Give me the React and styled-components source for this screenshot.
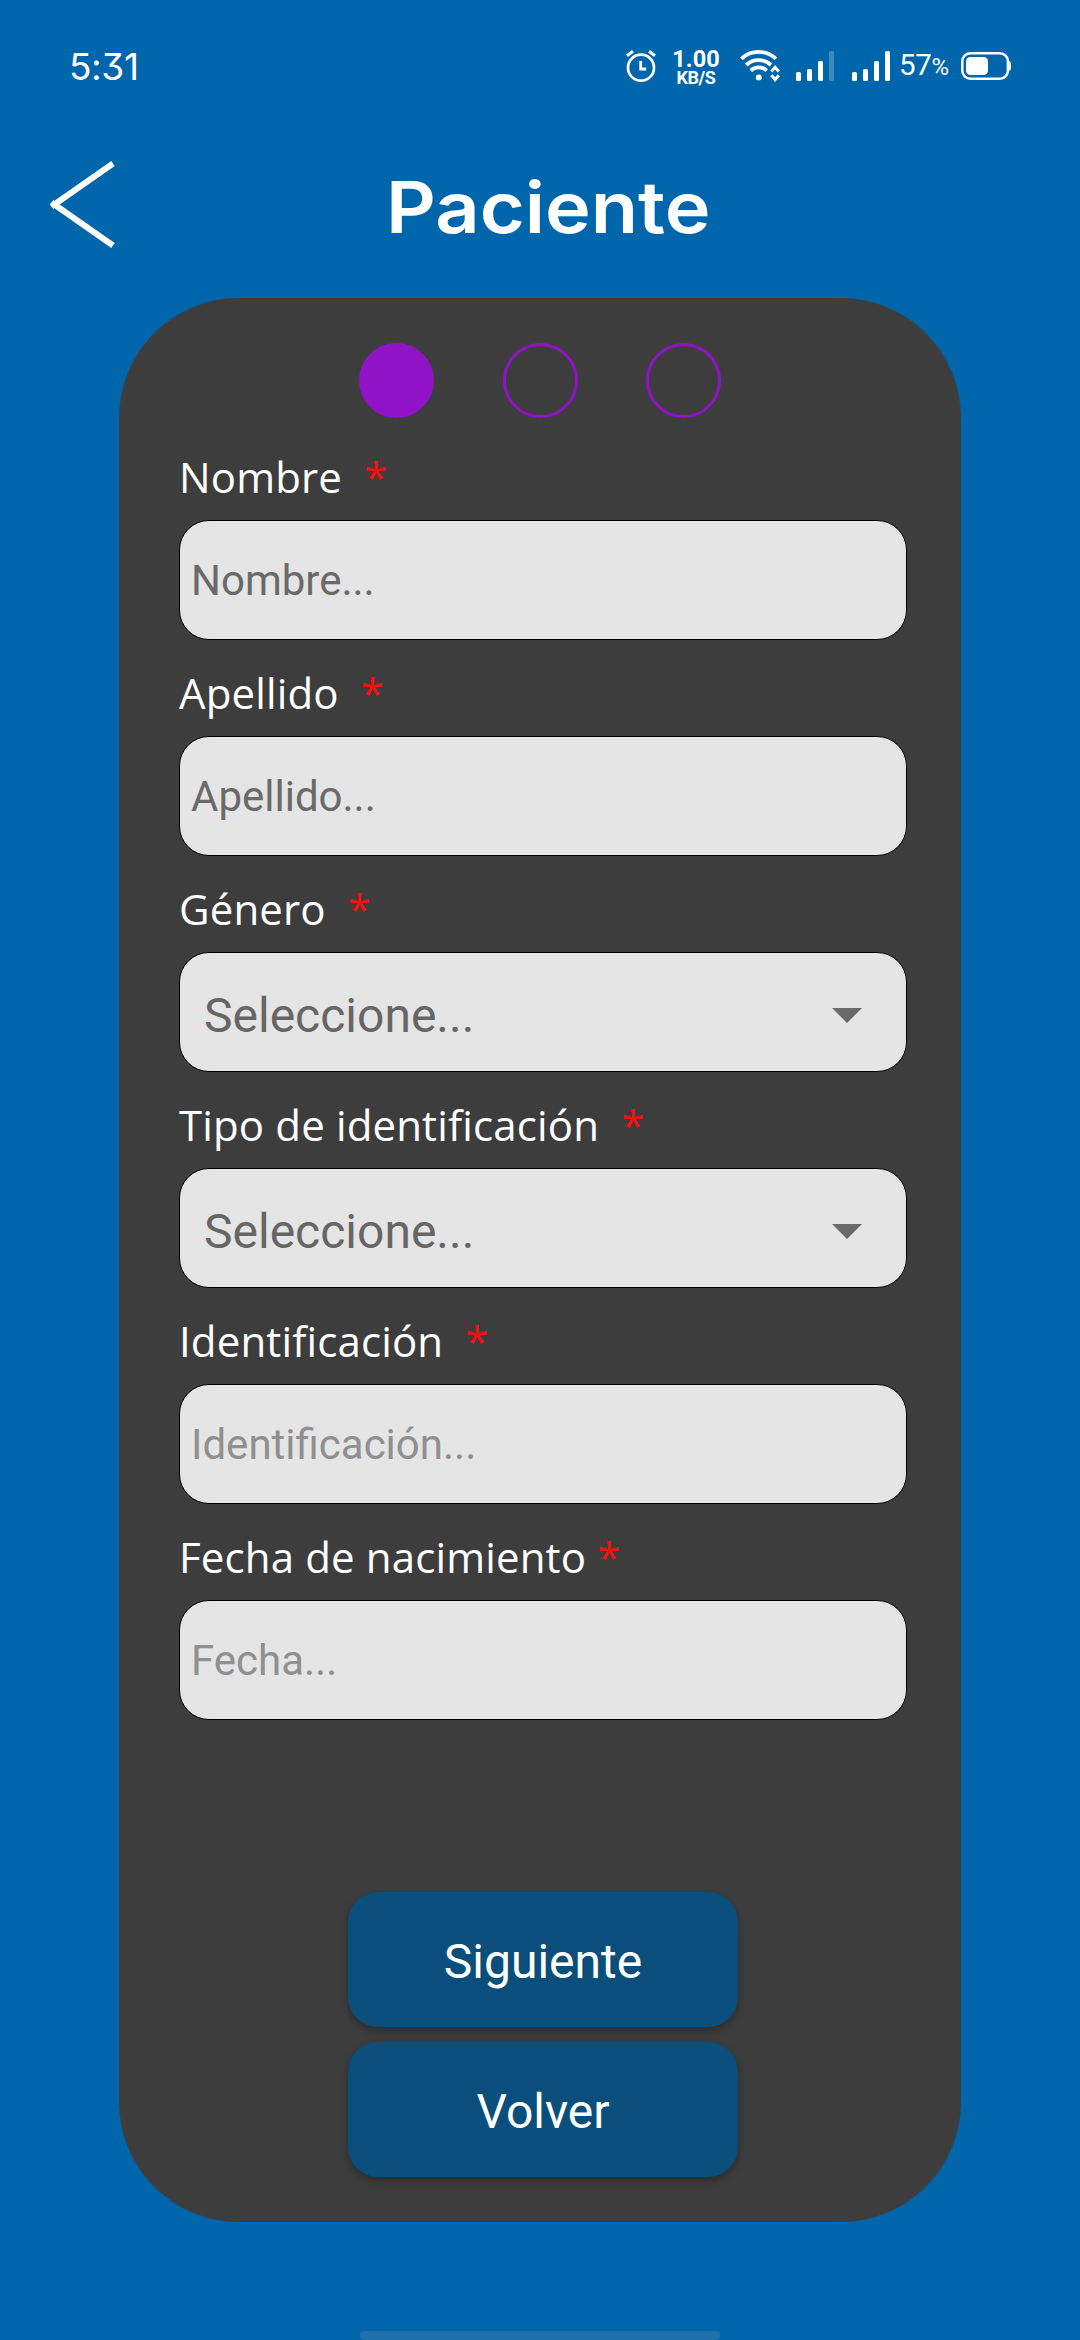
import React from "react";
import styled, { createGlobalStyle } from "styled-components";

const GlobalStyle = createGlobalStyle`
  *, *::before, *::after { box-sizing: border-box; }
  body { margin: 0; background: #0066ab; }
`;

const Screen = styled.div`
  width: 1080px;
  height: 2340px;
  display: flex;
  flex-direction: column;
  background: #0066ab;
  overflow: hidden;
  font-family: Roboto, sans-serif;
`;

const StatusBar = styled.div`
  height: 132px;
  flex: none;
  display: flex;
  justify-content: space-between;
  padding: 0 68px 0 69px;
  color: #fff;
`;

const Clock = styled.div`
  font: 400 37px/133px Inter, sans-serif;
  font-feature-settings: "cv09";
  letter-spacing: -0.4px;
`;

const StatusIcons = styled.div`
  display: flex;
  align-items: center;
  height: 132px;
  svg { display: block; flex: none; }
`;

const NetSpeed = styled.div`
  width: 48px;
  margin: 2px 20px 0 15px;
  display: flex;
  flex-direction: column;
  align-items: center;
  font-weight: 700;
`;

const SpeedValue = styled.span`
  font-size: 23.5px;
  line-height: 20px;
`;

const SpeedUnit = styled.span`
  font-size: 18px;
  line-height: 17px;
  letter-spacing: -0.4px;
`;

const Battery = styled.div`
  width: 62px;
  margin-left: -1px;
  font-size: 29.5px;
  line-height: 36px;
  font-weight: 400;
  letter-spacing: -0.3px;
  white-space: nowrap;
`;

const Percent = styled.span`
  font-size: 24px;
`;

const Header = styled.header`
  height: 166px;
  flex: none;
  display: flex;
  padding-left: 48px;
`;

const BackIcon = styled.svg`
  display: block;
  width: 70px;
  height: 100px;
  margin-top: 23px;
`;

const Title = styled.h1`
  margin: 0 0 0 268px;
  font: 600 71px/150px Inter, sans-serif;
  color: #fff;
  transform: scaleX(1.09);
  transform-origin: left center;
`;

const Card = styled.main`
  width: 842px;
  height: 1924px;
  flex: none;
  margin-left: 119px;
  padding: 45px 54px 45px 60px;
  border-radius: 120px;
  background: #3d3d3d;
  display: flex;
  flex-direction: column;
`;

const Steps = styled.div`
  display: flex;
  gap: 68.5px;
  padding-left: 180px;
  margin-bottom: 30px;
`;

const Step = styled.span`
  width: 75px;
  height: 75px;
  border-radius: 50%;
  border: 3px solid #9013c8;
  background: ${(p) => (p.$active ? "#9013c8" : "transparent")};
`;

const Form = styled.div`
  display: flex;
  flex-direction: column;
  gap: 24px;
`;

const Group = styled.div`
  height: 192px;
  display: flex;
  flex-direction: column;
  justify-content: space-between;
`;

const Label = styled.label`
  font: 400 42px/58px "Open Sans", sans-serif;
  letter-spacing: 0.14px;
  color: #fff;
  white-space: pre;
`;

const Required = styled.span`
  color: #fa0f0f;
`;

const Field = styled.div`
  width: 728px;
  height: 120px;
  border: 1px solid #000;
  border-radius: 30px;
  background: #e5e5e5;
  display: flex;
  align-items: center;
  justify-content: space-between;
  padding: ${(p) => (p.$select ? "6px 44px 0 24px" : "0 11px")};
  font-size: ${(p) => (p.$select ? 48 : 42)}px;
  color: ${(p) => (p.$select ? "#666" : p.$faint ? "#909090" : "#6a6a6a")};
`;

const Caret = styled.svg`
  display: block;
  width: 30px;
  height: 15px;
  margin-top: 1px;
`;

const Actions = styled.div`
  margin-top: auto;
  padding-left: 169px;
  display: flex;
  flex-direction: column;
  gap: 15px;
`;

const Button = styled.button`
  width: 390px;
  height: 135px;
  border: 0;
  border-radius: 30px;
  padding: 4px 0 0;
  background: #0a4f7b;
  color: #fff;
  font: 400 48px/56px Roboto, sans-serif;
  box-shadow: 0 4px 8px rgba(0, 0, 0, 0.28);
`;

const NavHandle = styled.div`
  width: 360px;
  height: 9px;
  margin: auto auto 0;
  border-radius: 4px;
  background: #2070ab;
`;

const fields = [
  { label: "Nombre", gap: "  ", text: "Nombre..." },
  { label: "Apellido", gap: "  ", text: "Apellido..." },
  { label: "Género", gap: "  ", text: "Seleccione...", select: true },
  { label: "Tipo de identificación", gap: "  ", text: "Seleccione...", select: true },
  { label: "Identificación", gap: "  ", text: "Identificación...", faint: true },
  { label: "Fecha de nacimiento", gap: " ", text: "Fecha...", faint: true },
];

const AlarmIcon = () => (
  <svg width="32" height="34" viewBox="0 0 32 34" fill="none" stroke="#fff">
    <circle cx="16" cy="18.7" r="13" strokeWidth="2.7" />
    <path d="M15.7 12v8h5.5" strokeWidth="2.8" />
    <path d="M2 6.8l6-4.6M24 2.2l6 4.6" strokeWidth="3" />
  </svg>
);

const WifiIcon = () => (
  <svg width="41" height="34" viewBox="0 0 41 34" fill="none" stroke="#fff">
    <path d="M1.3 9.8a25 25 0 0 1 34.6 0" strokeWidth="3.8" />
    <path d="M6.2 16a18 18 0 0 1 24.8 0" strokeWidth="3.8" />
    <path d="M10.7 21.6a11.5 11.5 0 0 1 16 0" strokeWidth="3.8" />
    <circle cx="18.8" cy="28.6" r="3" fill="#fff" stroke="none" />
    <path d="M31.4 22.6l3.7-4.3 3.7 4.3M31.4 26.3l3.7 4.3 3.7-4.3" strokeWidth="3" />
  </svg>
);

const SignalIcon = ({ weak }) => (
  <svg width="39" height="30" viewBox="0 0 39 30" fill="#fff">
    <rect x="0" y="21" width="5" height="9" rx="1.5" />
    <rect x="11" y="18" width="5" height="12" rx="1.5" />
    <rect x="22" y="10" width="5" height="20" rx="1.5" />
    <rect x="33" y="0" width="5" height="30" rx="1.5" opacity={weak ? 0.24 : 1} />
  </svg>
);

const BatteryIcon = () => (
  <svg width="51" height="28" viewBox="0 0 51 28">
    <rect x="1.3" y="1.3" width="45.6" height="25.4" rx="8" fill="none" stroke="#fff" strokeWidth="2.5" />
    <rect x="5" y="5" width="22" height="18" rx="4.5" fill="#fff" />
    <path d="M47 8.5q3 1 3 3v5q0 2-3 3z" fill="#fff" />
  </svg>
);

const SignalSlot = styled.div`
  margin: 0 ${(p) => p.$right}px 0 ${(p) => p.$left}px;
`;

export default function App() {
  return (
    <Screen>
      <GlobalStyle />
      <StatusBar>
        <Clock>5:31</Clock>
        <StatusIcons>
          <AlarmIcon />
          <NetSpeed>
            <SpeedValue>1.00</SpeedValue>
            <SpeedUnit>KB/S</SpeedUnit>
          </NetSpeed>
          <WifiIcon />
          <SignalSlot $left={15} $right={17}>
            <SignalIcon weak />
          </SignalSlot>
          <SignalSlot $left={0} $right={9}>
            <SignalIcon />
          </SignalSlot>
          <Battery>
            57<Percent>%</Percent>
          </Battery>
          <BatteryIcon />
        </StatusIcons>
      </StatusBar>
      <Header>
        <BackIcon viewBox="0 0 70 100" fill="none" stroke="#fff" strokeWidth="6">
          <path d="M65 8.5L3.5 51.5" />
          <path d="M3.5 47.5L65 90.5" />
        </BackIcon>
        <Title>Paciente</Title>
      </Header>
      <Card>
        <Steps>
          <Step $active />
          <Step />
          <Step />
        </Steps>
        <Form>
          {fields.map((f) => (
            <Group key={f.label}>
              <Label>
                {f.label}
                {f.gap}
                <Required>*</Required>
              </Label>
              <Field $select={f.select} $faint={f.faint}>
                {f.text}
                {f.select && (
                  <Caret viewBox="0 0 30 15" fill="#6a6a6a">
                    <path d="M0 0h30L15 15z" />
                  </Caret>
                )}
              </Field>
            </Group>
          ))}
        </Form>
        <Actions>
          <Button>Siguiente</Button>
          <Button>Volver</Button>
        </Actions>
      </Card>
      <NavHandle />
    </Screen>
  );
}
